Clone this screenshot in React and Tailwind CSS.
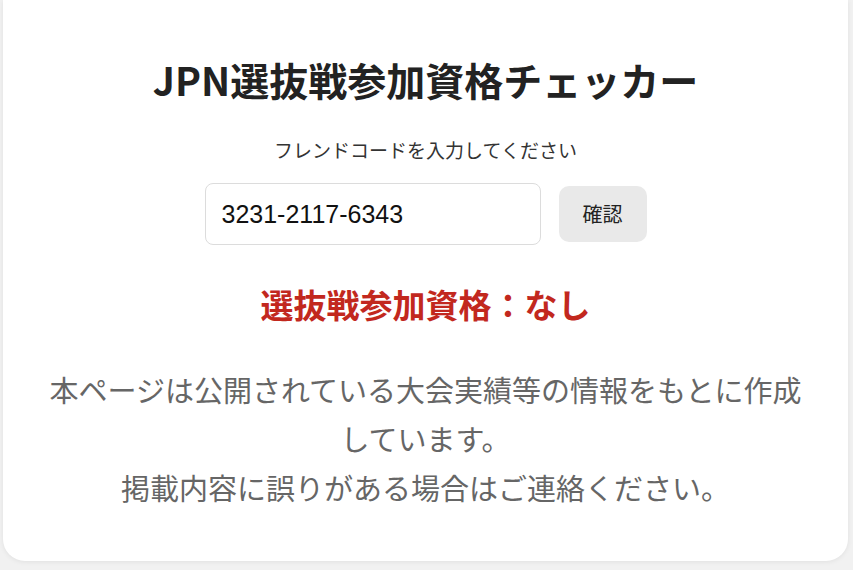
import React from "react";

export default function App() {
  return (
    <div className="min-h-screen bg-[#f1f1f1] px-[3px] pb-[7px] pr-[5px] font-['Noto_Sans_CJK_JP',sans-serif]">
      <div className="flex flex-col items-center rounded-b-[22px] bg-white px-[40px] pt-[55px] pb-[49px] shadow-[0_1px_5px_rgba(0,0,0,0.07)]">
        <h1 className="text-center text-[39px] font-bold leading-[48px] text-[#222222]">
          JPN選抜戦参加資格チェッカー
        </h1>
        <p className="mt-[33px] text-center text-[19px] leading-[28px] text-[#333333]">
          フレンドコードを入力してください
        </p>
        <div className="mt-[19px] flex items-center gap-[18px]">
          <input
            type="text"
            defaultValue="3231-2117-6343"
            className="h-[62px] w-[336px] rounded-[8px] border border-[#dcdcdc] bg-white px-[16px] font-['Liberation_Sans',sans-serif] text-[25px] text-[#111111] outline-none"
          />
          <button className="h-[56px] w-[88px] rounded-[10px] bg-[#e9e9e9] text-[20px] text-[#222222]">
            確認
          </button>
        </div>
        <p className="mt-[37px] text-center text-[33px] font-bold leading-[44px] text-[#c2281e]">
          選抜戦参加資格：なし
        </p>
        <p className="mt-[39px] text-center text-[29px] leading-[49px] text-[#666666]">
          本ページは公開されている大会実績等の情報をもとに作成しています。
          <br />
          掲載内容に誤りがある場合はご連絡ください。
        </p>
      </div>
    </div>
  );
}
